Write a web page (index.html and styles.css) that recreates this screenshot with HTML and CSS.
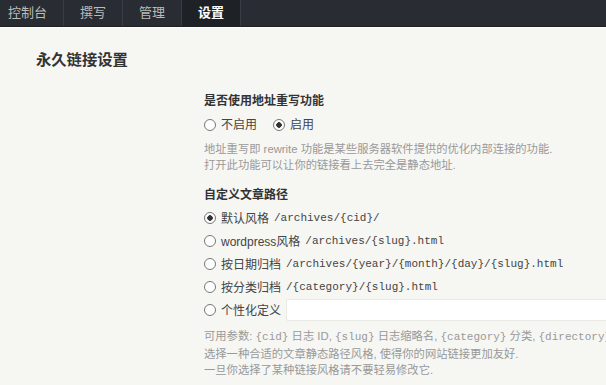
FILE: index.html
```html
<!DOCTYPE html>
<html>
<head>
  <title>永久链接设置</title>
  <meta charset="UTF-8">
  <link rel="stylesheet" href="styles.css">
</head>
<body>
  <div class="typecho-head-nav">
    <a class="nav-item" href="#">控制台</a>
    <a class="nav-item" href="#">撰写</a>
    <a class="nav-item" href="#">管理</a>
    <a class="nav-item focus" href="#">设置</a>
  </div>

  <div class="main">
    <h2 class="page-title">永久链接设置</h2>

    <form class="typecho-option-form">
      <div class="option">
        <label class="typecho-label">是否使用地址重写功能</label>
        <div class="inline-radios">
          <label class="radio"><input type="radio" name="rewrite"> 不启用</label>
          <label class="radio"><input type="radio" name="rewrite" checked> 启用</label>
        </div>
        <p class="description">地址重写即 rewrite 功能是某些服务器软件提供的优化内部连接的功能.<br>打开此功能可以让你的链接看上去完全是静态地址.</p>
      </div>

      <div class="option">
        <label class="typecho-label">自定义文章路径</label>
        <ul class="radio-list">
          <li><label class="radio"><input type="radio" name="postPattern" checked> 默认风格 <code>/archives/{cid}/</code></label></li>
          <li><label class="radio"><input type="radio" name="postPattern"> wordpress风格 <code>/archives/{slug}.html</code></label></li>
          <li><label class="radio"><input type="radio" name="postPattern"> 按日期归档 <code>/archives/{year}/{month}/{day}/{slug}.html</code></label></li>
          <li><label class="radio"><input type="radio" name="postPattern"> 按分类归档 <code>/{category}/{slug}.html</code></label></li>
          <li class="custom-row"><label class="radio"><input type="radio" name="postPattern"> 个性化定义</label><input type="text" class="text"></li>
        </ul>
        <p class="description">可用参数: <code>{cid}</code> 日志 ID, <code>{slug}</code> 日志缩略名, <code>{category}</code> 分类, <code>{directory}</code> 多<br>选择一种合适的文章静态路径风格, 使得你的网站链接更加友好.<br>一旦你选择了某种链接风格请不要轻易修改它.</p>
      </div>
    </form>
  </div>
</body>
</html>
```

FILE: styles.css
```css
html {
  overflow: hidden;
}
body {
  margin: 0;
  background-color: #F6F6F3;
  color: #444;
  font-family: "Liberation Sans", "Noto Sans CJK SC", sans-serif;
  font-size: 12px;
}
a {
  text-decoration: none;
}
code {
  font-family: "Liberation Mono", "Noto Sans CJK SC", monospace;
  font-size: 11px;
  color: #444;
}
.typecho-head-nav {
  display: flex;
  height: 26px;
  background-color: #292D33;
  border-bottom: 1px solid #1c1f23;
  box-shadow: 0 1px 0 #fff;
}
.nav-item {
  display: block;
  padding: 0 16px;
  line-height: 26px;
  font-size: 13px;
  color: #bbb;
  border-right: 1px solid #383D45;
}
.nav-item:first-child {
  padding: 0 16px 0 8px;
}
.nav-item.focus {
  background-color: #1E2125;
  color: #fff;
  font-weight: bold;
}
.main {
  padding-top: 22px;
}
.page-title {
  margin: 0 0 0 36px;
  font-size: 15.3px;
  line-height: 21px;
  color: #333;
}
.typecho-option-form {
  margin: 21px 0 0 204px;
  width: 620px;
}
.typecho-label {
  display: block;
  font-weight: bold;
  font-size: 12px;
  line-height: 20px;
  color: #333;
}
.option + .option {
  margin-top: 12px;
}
.inline-radios {
  display: flex;
  gap: 16px;
  margin-top: 4px;
  line-height: 20px;
}
.radio {
  display: inline-flex;
  align-items: center;
  gap: 5px;
  color: #444;
  white-space: nowrap;
}
.radio input {
  -webkit-appearance: none;
  appearance: none;
  margin: 0;
  width: 12px;
  height: 12px;
  border: 1px solid #777;
  border-radius: 50%;
  background: #fff;
}
.radio input:checked {
  background: radial-gradient(circle, #333 0 2.5px, #fff 3px);
}
.description {
  margin: 6px 0 0;
  font-size: 11.3px;
  line-height: 16px;
  color: #999;
  white-space: nowrap;
}
.description code {
  color: #999;
  font-size: 11px;
}
.radio-list {
  list-style: none;
  margin: 1px 0 0;
  padding: 0;
}
.radio-list li {
  display: flex;
  align-items: center;
  height: 23px;
}
.custom-row {
  gap: 5px;
}
.text {
  flex: 1;
  height: 22px;
  box-sizing: border-box;
  border: 1px solid #E9E9E6;
  border-radius: 2px;
  background: #fff;
  margin: 0;
}
.radio-list + .description {
  margin-top: 7px;
  line-height: 16.5px;
}
```
